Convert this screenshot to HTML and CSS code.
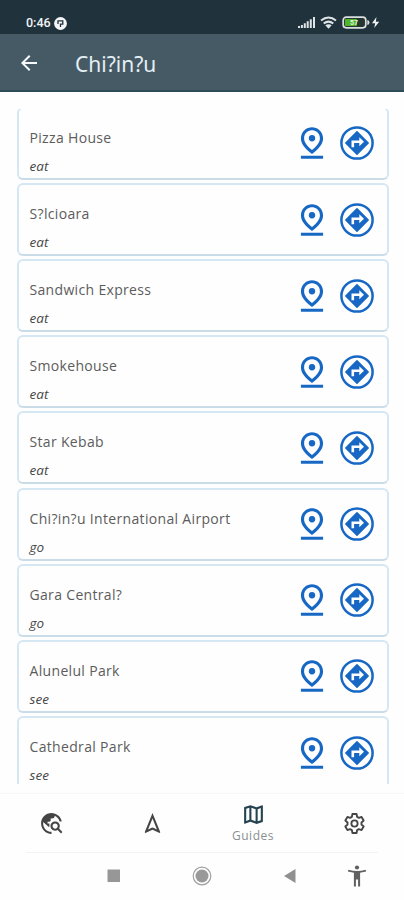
FILE: index.html
```
<!DOCTYPE html>
<html lang="en">
<head>
<meta charset="utf-8">
<title>Guides</title>
<link rel="stylesheet" href="styles.css">
</head>
<body>
<div class="status">
  <span class="time">0:46</span>
  <svg class="badge" width="13" height="13" viewBox="0 0 13 13"><circle cx="6.5" cy="6.5" r="6.400" fill="#f4f6f7"/><path d="M4 7V3.800h4.800v3.400H6.500V10" fill="none" stroke="#20313b" stroke-width="1.300"/></svg>
  <svg class="signals" width="84" height="16" viewBox="0 0 84 16">
    <path d="M3 11v2M5.900 10v3M8.800 8.300v4.700M11.700 6.300v6.700M14.800 4.300v8.700M18 2v11" stroke="#dfe4e6" stroke-width="2"/>
    <g fill="none" stroke="#dfe4e6" stroke-width="2"><path d="M25 5.600Q32.500-.6 40 5.600"/><path d="M27.700 8.500Q32.500 4.800 37.300 8.500"/></g>
    <path d="M29.300 10.300Q32.500 8 35.700 10.300L32.500 13.800z" fill="#dfe4e6"/>
    <rect x="47.200" y="2.200" width="22.600" height="10.600" rx="3" fill="#26352f" stroke="#d9dfdf" stroke-width="1.700"/>
    <rect x="49" y="4" width="12" height="7" rx="1" fill="#4fb62c"/>
    <path d="M71.300 5q2.200.3 2.200 2.500t-2.200 2.500z" fill="#d9dfdf"/>
    <text class="charge" x="54" y="10.200">57</text>
    <path d="M80.500 2L76 8.300h3.200L78.200 13l5-6.200h-3.400z" fill="#f2f4f5"/>
  </svg>
</div>
<header class="bar">
  <svg width="24" height="24" viewBox="0 0 24 24"><path d="M20 11H7.830l5.590-5.590L12 4l-8 8 8 8 1.410-1.410L7.830 13H20z" fill="#f7fafb"/></svg>
  <h1>Chi?in?u</h1>
</header>

<svg class="defs" width="0" height="0">
  <symbol id="pin" viewBox="0 0 24 24"><path d="M12 4c1.930 0 5 1.400 5 5.150 0 2.160-1.720 4.670-5 7.320-3.280-2.650-5-5.170-5-7.320C7 5.400 10.070 4 12 4m0-2C8.730 2 5 4.460 5 9.150c0 3.120 2.330 6.410 7 9.850 4.670-3.440 7-6.730 7-9.850C19 4.460 15.270 2 12 2zM5 20h14v2H5z"/><circle cx="12" cy="9" r="2"/></symbol>
  <symbol id="route" viewBox="0 0 34 34"><circle cx="17" cy="17" r="15.600" fill="none" stroke="currentColor" stroke-width="2.500"/><path d="M17 5.800L28.200 17 17 28.200 5.800 17z" stroke="currentColor" stroke-width="1.500" stroke-linejoin="round"/><path d="M12.800 21.200V15.700h7.500" fill="none" stroke="#fff" stroke-width="2.600"/><path d="M19.300 11.200l4.700 4.500-4.700 4.500z" fill="#fff"/></symbol>
</svg>

<main class="list">
  <article class="card"><div class="info"><h2>Pizza House</h2><p>eat</p></div><svg class="pin"><use href="#pin"/></svg><svg class="route"><use href="#route"/></svg></article>
  <article class="card"><div class="info"><h2>S?lcioara</h2><p>eat</p></div><svg class="pin"><use href="#pin"/></svg><svg class="route"><use href="#route"/></svg></article>
  <article class="card"><div class="info"><h2>Sandwich Express</h2><p>eat</p></div><svg class="pin"><use href="#pin"/></svg><svg class="route"><use href="#route"/></svg></article>
  <article class="card"><div class="info"><h2>Smokehouse</h2><p>eat</p></div><svg class="pin"><use href="#pin"/></svg><svg class="route"><use href="#route"/></svg></article>
  <article class="card"><div class="info"><h2>Star Kebab</h2><p>eat</p></div><svg class="pin"><use href="#pin"/></svg><svg class="route"><use href="#route"/></svg></article>
  <article class="card"><div class="info"><h2>Chi?in?u International Airport</h2><p>go</p></div><svg class="pin"><use href="#pin"/></svg><svg class="route"><use href="#route"/></svg></article>
  <article class="card"><div class="info"><h2>Gara Central?</h2><p>go</p></div><svg class="pin"><use href="#pin"/></svg><svg class="route"><use href="#route"/></svg></article>
  <article class="card"><div class="info"><h2>Alunelul Park</h2><p>see</p></div><svg class="pin"><use href="#pin"/></svg><svg class="route"><use href="#route"/></svg></article>
  <article class="card"><div class="info"><h2>Cathedral Park</h2><p>see</p></div><svg class="pin"><use href="#pin"/></svg><svg class="route"><use href="#route"/></svg></article>
</main>

<nav class="tabs">
  <div class="tab"><svg width="25" height="25" viewBox="0 0 24 24"><path d="M19.300 16.900c.4-.7.700-1.500.7-2.400 0-2.500-2-4.500-4.500-4.500S11 12 11 14.500s2 4.500 4.500 4.500c.9 0 1.700-.3 2.400-.7l3.200 3.200 1.400-1.400-3.200-3.200zm-3.800.1c-1.400 0-2.500-1.100-2.500-2.500s1.100-2.500 2.500-2.500 2.500 1.100 2.500 2.500-1.100 2.500-2.500 2.500zM12 20v2C6.480 22 2 17.520 2 12S6.480 2 12 2c4.840 0 8.870 3.440 9.800 8h-2.070c-.64-2.460-2.400-4.470-4.730-5.410V5c0 1.100-.9 2-2 2h-2v2c0 .55-.45 1-1 1H8v2h2v3H9l-4.790-4.790C4.080 10.790 4 11.380 4 12c0 4.410 3.590 8 8 8z"/><path d="M4 10.500C5 6 8.500 3.300 15 4.200L13 7h-2v2l-1 1H8v2l-1 1z"/></svg></div>
  <div class="tab"><svg width="25" height="25" viewBox="0 0 24 24"><path d="M12 7.270l4.280 10.430-3.470-1.530-.81-.36-.81.360-3.470 1.530L12 7.270M12 2L4.500 20.290l.71.710L12 18l6.790 3 .71-.71L12 2z"/></svg></div>
  <div class="tab active"><svg width="25" height="25" viewBox="0 0 24 24"><path d="M20.500 3l-.16.030L15 5.100 9 3 3.360 4.900c-.21.070-.36.250-.36.480V20.500c0 .28.220.5.500.5l.16-.03L9 18.900l6 2.100 5.640-1.900c.21-.07.360-.25.360-.48V3.500c0-.28-.22-.5-.5-.5zM10 5.470l4 1.400v11.660l-4-1.400V5.470zm-5 .99l3-1.010v11.700l-3 1.160V6.460zm14 11.080l-3 1.010V6.860l3-1.160v11.840z"/></svg><span>Guides</span></div>
  <div class="tab"><svg width="25" height="25" viewBox="0 0 24 24"><g fill="none" stroke="#454545" stroke-width="1.800" stroke-linejoin="round"><path d="M10 2.900h4l.5 2.700 1.700 1 2.600-.9 2 3.400-2.100 1.900v2l2.100 1.900-2 3.400-2.600-.9-1.700 1-.5 2.700h-4l-.5-2.700-1.700-1-2.600.9-2-3.400L5.300 13v-2L3.200 9.100l2-3.400 2.600.9 1.700-1z"/><circle cx="12" cy="12" r="3"/></g></svg></div>
</nav>
<footer class="system">
  <div><svg width="14" height="14"><rect x=".5" y=".5" width="12.500" height="12.500" fill="#979797"/></svg></div>
  <div><svg width="20" height="20"><circle cx="10" cy="10" r="8.800" fill="none" stroke="#a0a0a0" stroke-width="1.200"/><circle cx="10" cy="10" r="6.500" fill="#999"/></svg></div>
  <div><svg width="14" height="16"><path d="M12.500 1v14L1 8z" fill="#909090"/></svg></div>
  <div><svg width="20" height="22" viewBox="0 0 20 22"><circle cx="10" cy="2.500" r="2.100"/><path d="M1.300 4.800Q10 7.400 18.700 4.800l.4 1.700-6 1.200V21.500h-2V14.500H8.900v7h-2V7.700l-6-1.200z"/></svg></div>
</footer>
</body>
</html>
```
FILE: styles.css
```
* { box-sizing: border-box; }
body {
  margin: 0;
  width: 404px;
  height: 900px;
  overflow: hidden;
  display: flex;
  flex-direction: column;
  background: #fefefe;
  font-family: "Open Sans", "Noto Sans", sans-serif;
}
h1, h2, p { margin: 0; }
.status {
  flex: none;
  height: 34px;
  padding: 12px 24px 0 26px;
  display: flex;
  align-items: center;
  background: #20323c;
}
.time {
  font: 500 12.5px/16px Roboto, sans-serif;
  color: #f2f4f5;
}
.badge { margin-left: 3px; }
.signals { margin-left: auto; }
.charge { font: 700 7px Roboto, sans-serif; fill: #e4f4dd; }
.bar {
  flex: none;
  height: 58px;
  padding: 2px 17px 0;
  display: flex;
  align-items: center;
  gap: 34px;
  background: #465a65;
  border-bottom: 2px solid #2d4b58;
}
.bar h1 {
  padding-top: 2px;
  font: 400 21px/28px "Noto Sans", sans-serif;
  color: #e4eff4;
}
.defs { display: block; flex: none; }
.list {
  flex: none;
  height: 675px;
  margin: 17px 15.5px 0 16.5px;
  overflow: hidden;
  display: flex;
  flex-direction: column;
  justify-content: flex-end;
  gap: 3.150px;
}
.card {
  flex: none;
  height: 73px;
  padding: 0 13px 0 11px;
  display: flex;
  align-items: center;
  background: #fefefe;
  border: 2px solid #d5e7f3;
  border-bottom-color: #c9dce8;
  border-radius: 6px;
  color: #1768c5;
}
.card:last-child { margin-bottom: -5px; }
.info { flex: 1; padding-top: 17px; }
.info h2 {
  font-size: 14px;
  font-weight: 400;
  line-height: 28px;
  letter-spacing: 0.330px;
  color: #5c5c5c;
  white-space: nowrap;
}
.info p {
  font-size: 13.500px;
  font-style: italic;
  line-height: 28px;
  letter-spacing: 0.100px;
  color: #484848;
}
.pin { width: 38px; height: 38px; fill: currentColor; }
.route { width: 34px; height: 34px; margin-left: 9px; fill: currentColor; }
.tabs {
  flex: none;
  height: 59px;
  margin-top: 9px;
  padding-left: 0.5px;
  display: grid;
  grid-template-columns: repeat(4, 101px);
  border-top: 1px solid #f8f8f8;
}
.tab {
  display: flex;
  flex-direction: column;
  align-items: center;
  justify-content: center;
  fill: #454545;
}
.active { fill: #24424f; }
.tab span {
  font-size: 12px;
  line-height: 18px;
  letter-spacing: 0.5px;
  color: #8b8f92;
}
.system {
  flex: none;
  height: 47px;
  margin: 0 26px;
  border-top: 1px solid #f3f3f3;
  padding-left: 44px;
  display: grid;
  grid-template-columns: 88px 88px 87px 48px;
  align-items: center;
}
.system div { display: flex; justify-content: center; fill: #606060; }
```
